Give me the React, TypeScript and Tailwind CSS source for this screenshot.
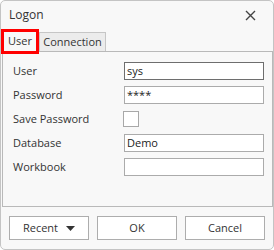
import React from 'react';

const fieldRows = [
  { label: 'User', value: 'sys', focused: true },
  { label: 'Password', value: '****' },
  { label: 'Save Password', checkbox: true },
  { label: 'Database', value: 'Demo' },
  { label: 'Workbook', value: '' },
];

export default function App() {
  return (
    <div className="w-[274px] h-[250px] bg-white text-[#333] font-['Open_Sans',sans-serif]">
      <div className="w-[274px] h-[250px] flex flex-col border border-[#c4c4c4] rounded-[5px] bg-[#f8f8f8] overflow-hidden">
        {/* title bar */}
        <div className="h-[28px] flex items-center justify-between pl-[8px] pr-[17px]">
          <span className="text-[12px] leading-none text-[#333]">Logon</span>
          <svg width="11" height="11" viewBox="0 0 11 11">
            <path d="M1 1 L10 10 M10 1 L1 10" stroke="#444" strokeWidth="1.4" />
          </svg>
        </div>

        {/* tabs */}
        <div className="h-[22px] flex items-end">
          <div className="relative z-10 h-[25px] w-[38px] -mb-[3px] border-[3px] border-[#ff0000] flex items-center justify-center text-[11px] text-[#333] bg-[#f8f8f8]">
            User
          </div>
          <div className="h-[19px] w-[67px] border border-b-0 border-[#c6c6c6] bg-[#ececec] flex items-center justify-center text-[11px] text-[#333]">
            Connection
          </div>
        </div>

        {/* panel */}
        <div className="h-[156px] ml-[1px] border border-[#b9b9b9] bg-[#f8f8f8] pt-[10px] pl-[10px] pr-[8px] flex flex-col gap-[6px]">
          {fieldRows.map((row) => (
            <div key={row.label} className="h-[18px] flex items-center">
              <span className="w-[111px] text-[11px] text-[#333]">{row.label}</span>
              {row.checkbox ? (
                <div className="-ml-[1px] w-[16px] h-[16px] border border-[#a8a8a8] bg-white" />
              ) : (
                <div
                  className={
                    row.focused
                      ? 'flex-1 h-[18px] border border-[#6e6e6e] bg-white pl-[2px] flex items-center text-[11px] text-[#222]'
                      : 'flex-1 h-[18px] border border-[#ababab] bg-white pl-[2px] flex items-center text-[11px] text-[#222]'
                  }
                >
                  {row.value}
                </div>
              )}
            </div>
          ))}
        </div>

        {/* footer */}
        <div className="flex gap-[8px] pl-[8px] pt-[9px]">
          <button className="w-[80px] h-[24px] border border-[#adadad] bg-white flex items-center justify-center gap-[8px] text-[11px] text-[#333]">
            <span>Recent</span>
            <svg width="9" height="5" viewBox="0 0 9 5">
              <path d="M0 0 L9 0 L4.5 5 Z" fill="#333" />
            </svg>
          </button>
          <button className="w-[80px] h-[24px] border border-[#adadad] bg-white flex items-center justify-center text-[11px] text-[#333]">
            OK
          </button>
          <button className="w-[80px] h-[24px] border border-[#adadad] bg-white flex items-center justify-center text-[11px] text-[#333]">
            Cancel
          </button>
        </div>
      </div>
    </div>
  );
}
